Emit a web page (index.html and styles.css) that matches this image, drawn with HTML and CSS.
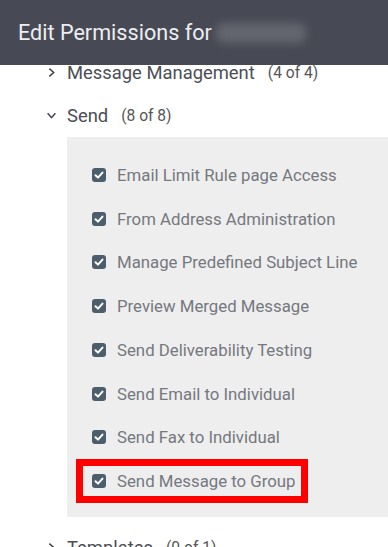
FILE: index.html
```html
<!DOCTYPE html>
<html lang="en">

<head>
    <meta charset="UTF-8">
    <meta name="viewport" content="width=device-width, initial-scale=1.0">
    <title>Edit Permissions</title>
    <link rel="stylesheet" href="styles.css">
</head>

<body>
    <div class="modal-header">
        <h1>Edit Permissions for</h1>
        <span class="redacted"></span>
    </div>
    <div class="modal-body">
        <div class="tree">
            <div class="group-row">
                <svg class="chevron" viewBox="0 0 10 10"><polyline points="3,1.5 7,5 3,8.5" /></svg>
                <span class="group-name">Message Management</span>
                <span class="group-count">(4 of 4)</span>
            </div>
            <div class="group-row">
                <svg class="chevron" viewBox="0 0 10 10"><polyline points="1.5,3 5,7 8.5,3" /></svg>
                <span class="group-name">Send</span>
                <span class="group-count">(8 of 8)</span>
            </div>
            <div class="perm-list">
                <label class="perm"><span class="check"><svg viewBox="0 0 14 14"><polyline points="3.5,7.2 6,9.6 10.5,4.6" /></svg></span>Email Limit Rule page Access</label>
                <label class="perm"><span class="check"><svg viewBox="0 0 14 14"><polyline points="3.5,7.2 6,9.6 10.5,4.6" /></svg></span>From Address Administration</label>
                <label class="perm"><span class="check"><svg viewBox="0 0 14 14"><polyline points="3.5,7.2 6,9.6 10.5,4.6" /></svg></span>Manage Predefined Subject Line</label>
                <label class="perm"><span class="check"><svg viewBox="0 0 14 14"><polyline points="3.5,7.2 6,9.6 10.5,4.6" /></svg></span>Preview Merged Message</label>
                <label class="perm"><span class="check"><svg viewBox="0 0 14 14"><polyline points="3.5,7.2 6,9.6 10.5,4.6" /></svg></span>Send Deliverability Testing</label>
                <label class="perm"><span class="check"><svg viewBox="0 0 14 14"><polyline points="3.5,7.2 6,9.6 10.5,4.6" /></svg></span>Send Email to Individual</label>
                <label class="perm"><span class="check"><svg viewBox="0 0 14 14"><polyline points="3.5,7.2 6,9.6 10.5,4.6" /></svg></span>Send Fax to Individual</label>
                <label class="perm highlight"><span class="check"><svg viewBox="0 0 14 14"><polyline points="3.5,7.2 6,9.6 10.5,4.6" /></svg></span>Send Message to Group</label>
            </div>
            <div class="group-row last">
                <svg class="chevron" viewBox="0 0 10 10"><polyline points="3,1.5 7,5 3,8.5" /></svg>
                <span class="group-name">Templates</span>
                <span class="group-count">(0 of 1)</span>
            </div>
        </div>
    </div>
</body>

</html>
```

FILE: styles.css
```css
html,
body {
    height: 100%;
}

body {
    margin: 0;
    font-family: Roboto, "Liberation Sans", sans-serif;
    background-color: #fff;
    display: flex;
    flex-direction: column;
    overflow: hidden;
}

.modal-header {
    height: 65px;
    flex-shrink: 0;
    background-color: #474a54;
    display: flex;
    align-items: center;
    padding-left: 18px;
    position: relative;
    z-index: 1;
}

.modal-header h1 {
    margin: 0;
    font-size: 21.6px;
    font-weight: 400;
    color: #eceef2;
}

.redacted {
    display: inline-block;
    width: 90px;
    height: 20px;
    margin-left: 4px;
    background-color: #63666f;
    border-radius: 8px;
    filter: blur(4px);
}

.modal-body {
    flex: 1;
    overflow: hidden;
}

/* scrolled a bit, first row slides under header */
.tree {
    margin-top: -14px;
}

.group-row {
    height: 43px;
    display: flex;
    align-items: center;
    padding-left: 46px;
    color: #4b4e56;
}

.group-row.last {
    margin-top: 9px;
}

.chevron {
    width: 11px;
    height: 11px;
    margin-right: 10px;
    fill: none;
    stroke: #3c3f46;
    stroke-width: 1.3;
}

.group-name {
    font-size: 18.4px;
}

.group-count {
    font-size: 15.6px;
    margin-left: 13px;
    color: #555;
}

.perm-list {
    margin-left: 67px;
    background-color: #eeeeee;
    padding: 16px 0 14px 25px;
}

.perm {
    height: 43.75px;
    box-sizing: border-box;
    display: flex;
    align-items: center;
    font-size: 16.8px;
    color: #75787f;
}

.check {
    width: 14px;
    height: 14px;
    border-radius: 3px;
    background-color: #4c5d6c;
    margin-right: 11px;
    display: flex;
}

.check svg {
    width: 14px;
    height: 14px;
    fill: none;
    stroke: #fff;
    stroke-width: 2;
    stroke-linecap: round;
    stroke-linejoin: round;
}

.perm.highlight {
    width: fit-content;
    border: 7px solid #ff0000;
    margin-left: -16px;
    padding: 0 5px 0 9px;
}
```
